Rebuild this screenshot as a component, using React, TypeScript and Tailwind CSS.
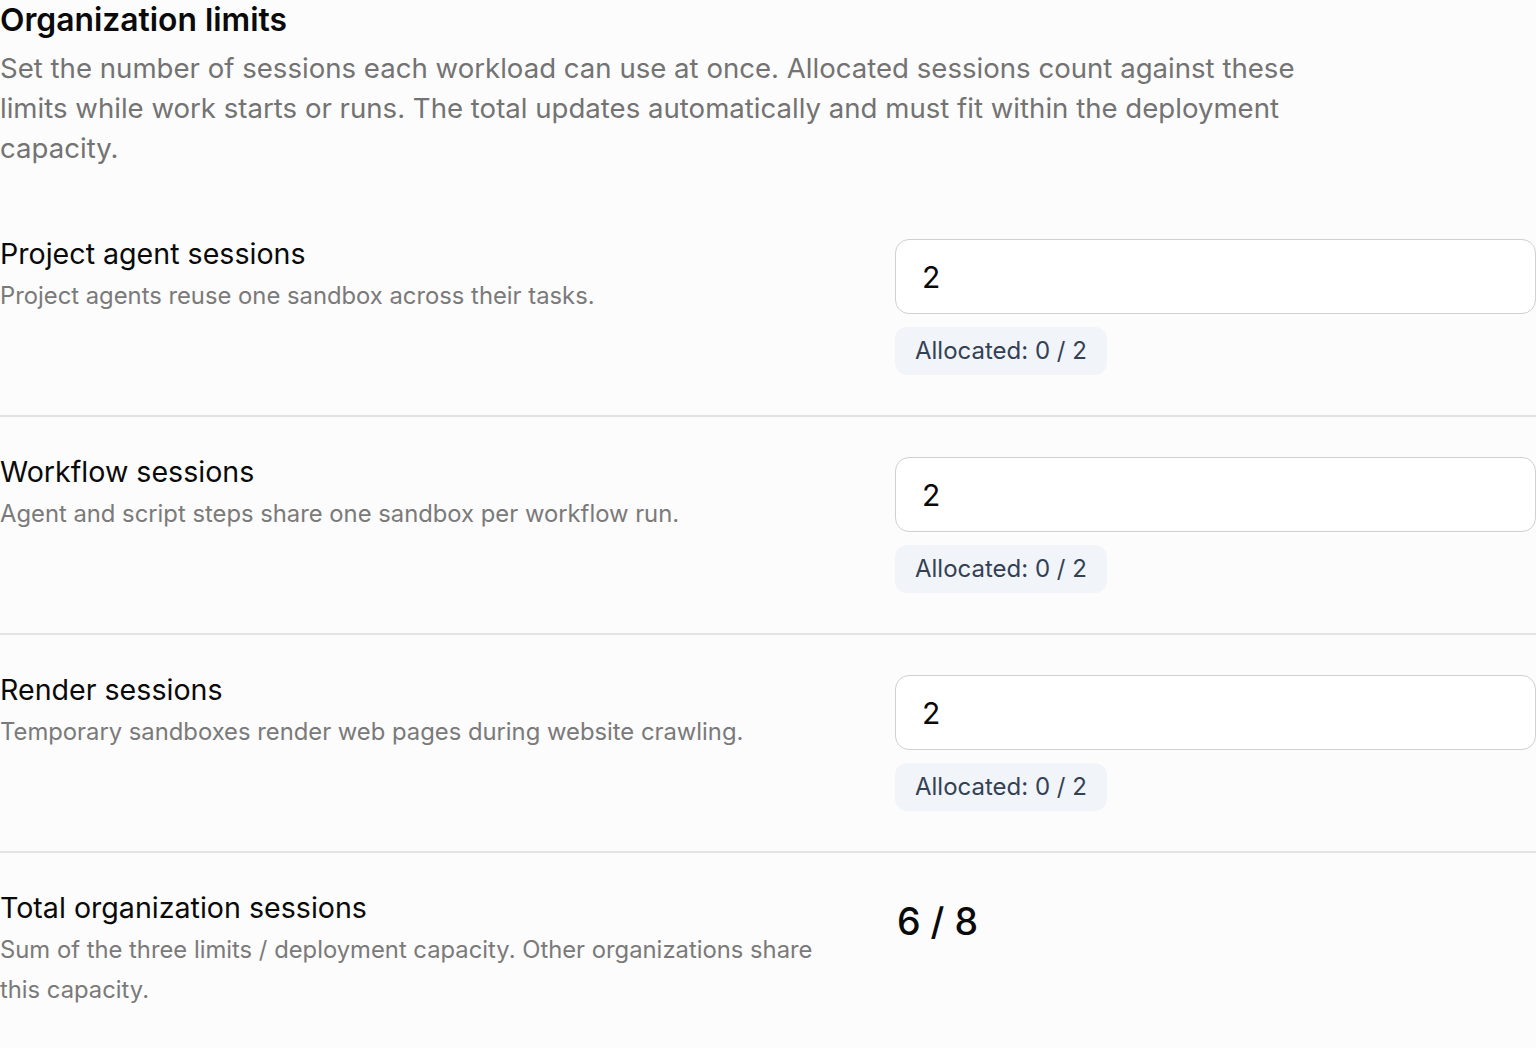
import { useState } from 'react';

interface LimitRow {
  id: string;
  label: string;
  hint: string;
  allocated: number;
}

const ROWS: LimitRow[] = [
  {
    id: 'project',
    label: 'Project agent sessions',
    hint: 'Project agents reuse one sandbox across their tasks.',
    allocated: 0,
  },
  {
    id: 'workflow',
    label: 'Workflow sessions',
    hint: 'Agent and script steps share one sandbox per workflow run.',
    allocated: 0,
  },
  {
    id: 'render',
    label: 'Render sessions',
    hint: 'Temporary sandboxes render web pages during website crawling.',
    allocated: 0,
  },
];

const CAPACITY = 8;

export default function App() {
  const [limits, setLimits] = useState<Record<string, string>>({
    project: '2',
    workflow: '2',
    render: '2',
  });

  const total = ROWS.reduce((sum, row) => sum + (Number(limits[row.id]) || 0), 0);

  return (
    <div className="min-h-screen bg-[#fcfcfc] font-['Inter','Noto_Sans',sans-serif] text-[#0a0a0a]">
      <header className="mb-[31px]">
        <h1 className="text-[31.8px] leading-[40px] font-semibold">Organization limits</h1>
        <p className="mt-2 max-w-[1330px] text-[27.6px] leading-[40px] text-[#737373]">
          Set the number of sessions each workload can use at once. Allocated sessions count
          against these limits while work starts or runs. The total updates automatically and must
          fit within the deployment capacity.
        </p>
      </header>

      <div className="divide-y-2 divide-[#e3e3e3]">
        {ROWS.map((row) => (
          <section key={row.id} className="grid grid-cols-[855px_1fr] gap-10 py-10">
            <div>
              <h2 className="text-[28.6px] leading-[30px] font-normal">{row.label}</h2>
              <p className="mt-[7px] text-[23.8px] leading-[40px] text-[#7a7a7a]">{row.hint}</p>
            </div>
            <div className="flex flex-col items-start gap-[13px]">
              <input
                type="text"
                value={limits[row.id]}
                onChange={(e) => setLimits({ ...limits, [row.id]: e.target.value })}
                className="h-[75px] w-full rounded-[14px] border-[1.5px] border-[#d0d0d0] bg-white px-[26px] text-[30px] text-[#0a0a0a] outline-none"
              />
              <span className="rounded-[12px] bg-[#f1f4f8] px-5 text-[24px] leading-[48px] text-[#334155]">
                Allocated: {row.allocated} / {limits[row.id] || 0}
              </span>
            </div>
          </section>
        ))}

        <section className="grid grid-cols-[855px_1fr] gap-10 py-10">
          <div>
            <h2 className="text-[28.6px] leading-[30px] font-normal">Total organization sessions</h2>
            <p className="mt-[7px] text-[23.8px] leading-[40px] text-[#7a7a7a]">
              Sum of the three limits / deployment capacity. Other organizations share this
              capacity.
            </p>
          </div>
          <div className="pt-[3px] pl-[2px] text-[37.5px] leading-[52px] font-medium">
            {total} / {CAPACITY}
          </div>
        </section>
      </div>
    </div>
  );
}
